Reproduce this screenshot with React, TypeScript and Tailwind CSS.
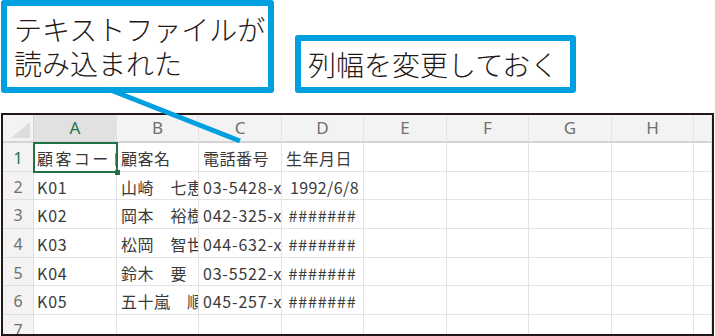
import React from "react";

const colLetters = ["A", "B", "C", "D", "E", "F", "G", "H", ""];

const rows: string[][] = [
  ["顧客コード", "顧客名", "電話番号", "生年月日"],
  ["K01", "山崎　七恵", "03-5428-xxxx", "1992/6/8"],
  ["K02", "岡本　裕樹", "042-325-xxxx", "#######"],
  ["K03", "松岡　智世", "044-632-xxxx", "#######"],
  ["K04", "鈴木　要", "03-5522-xxxx", "#######"],
  ["K05", "五十嵐　順", "045-257-xxxx", "#######"],
  [],
];

const font = { fontFamily: '"Noto Sans CJK JP", "Noto Sans", sans-serif' };
const latinFont = { fontFamily: '"Noto Sans", sans-serif' };

function Callout({
  children,
  className,
}: {
  children: React.ReactNode;
  className: string;
}) {
  return (
    <div
      className={`rounded-[3px] border-[6px] border-[#00a0e0] bg-white text-[28px] font-light leading-[34px] text-[#231815] ${className}`}
    >
      {children}
    </div>
  );
}

function Cell({ row, col, text }: { row: number; col: number; text?: string }) {
  const isHash = text === "#######";
  const isDate = col === 3 && row > 0 && !isHash && !!text;
  const latin = !!text && /^[\x20-\x7e]+$/.test(text);

  let align = "justify-start pl-[4px]";
  if (col === 0) align = "justify-start pl-[3px]";
  if (isHash) align = "justify-center";
  if (isDate) align = "justify-end pr-[4px]";

  let track = latin ? "tracking-[0.8px]" : "tracking-[0.5px]";
  if (row === 0 && col === 0) track = "tracking-[2.4px]";
  if (isDate) track = "tracking-[0.4px]";

  return (
    <div
      className={`flex items-center overflow-hidden whitespace-nowrap border-b border-r border-[#e3e3e3] bg-white ${align}`}
    >
      <span className={`shrink-0 pt-[2px] text-[16px] text-[#3a3a3a] ${track}`}>{text}</span>
    </div>
  );
}

function Sheet() {
  return (
    <div className="relative ml-[1px] mt-[20px] h-[223px] w-[713px] overflow-hidden border-2 border-[#231815]">
      <div className="grid grid-cols-[31px_83px_82px_83px_82px_83px_82px_83px_82px_1fr] grid-rows-[28px_repeat(7,28.7px)]">
        <div className="relative border-b-2 border-r border-[#d4d4d4] bg-[#f3f3f3]">
          <svg className="absolute bottom-[3px] right-[3px]" width="19" height="16" viewBox="0 0 19 16">
            <polygon points="19,0 19,16 0,16" fill="#dcdcdc" />
          </svg>
        </div>
        {colLetters.map((c, i) => (
          <div
            key={c + i}
            className={`flex items-center justify-center border-b-2 border-r border-b-[#d4d4d4] border-r-[#e3e3e3] text-[17px] ${
              i === 0 ? "bg-[#e1e1e1] text-[#217346]" : "bg-[#f3f3f3] text-[#707070]"
            }`}
            style={latinFont}
          >
            {c}
          </div>
        ))}
        {rows.map((r, ri) => (
          <React.Fragment key={ri}>
            <div
              className={`flex items-start justify-center border-b border-r border-[#e0e0e0] bg-[#f3f3f3] pt-[3px] text-[16px] ${
                ri === 0 ? "text-[#217346]" : "text-[#707070]"
              }`}
              style={latinFont}
            >
              {ri + 1}
            </div>
            {colLetters.map((_, ci) => (
              <Cell key={ci} row={ri} col={ci} text={r[ci]} />
            ))}
          </React.Fragment>
        ))}
      </div>
      {/* active cell selection (A1) */}
      <div className="pointer-events-none absolute left-[30px] top-[27px] h-[30.7px] w-[85px] border-2 border-[#217346]">
        <span className="absolute -bottom-[4px] -right-[4px] h-[5px] w-[5px] bg-[#217346]" />
      </div>
    </div>
  );
}

export default function App() {
  return (
    <div className="relative h-[336px] w-[715px] overflow-hidden bg-white" style={font}>
      <div className="flex items-end">
        <Callout className="ml-[1px] h-[93px] w-[273px] pl-[7px] pt-[6px]">
          <p>テキストファイルが</p>
          <p>読み込まれた</p>
        </Callout>
        <Callout className="ml-[21px] flex h-[58px] w-[281px] items-center pl-[7px]">
          <p>列幅を変更しておく</p>
        </Callout>
      </div>
      <Sheet />
      <svg
        className="pointer-events-none absolute left-0 top-0 z-10"
        width="715"
        height="336"
        viewBox="0 0 715 336"
      >
        <line x1="108" y1="89" x2="240" y2="141" stroke="#00a0e0" strokeWidth="5" />
      </svg>
    </div>
  );
}
